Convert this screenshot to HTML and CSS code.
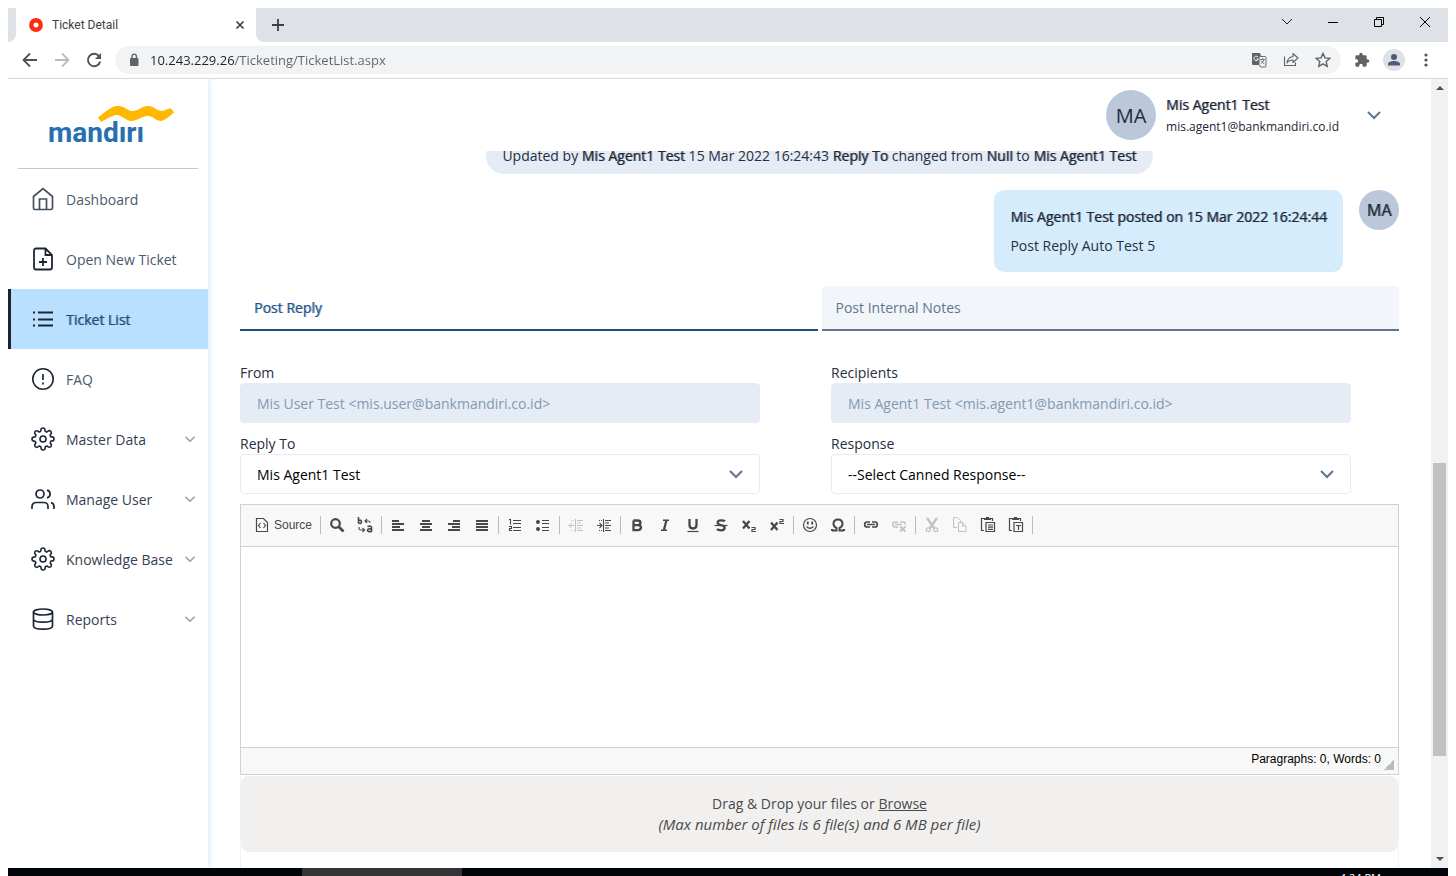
FILE: index.html
```html
<!DOCTYPE html>
<html lang="en">
<head>
<meta charset="utf-8">
<title>Ticket Detail</title>
<link rel="stylesheet" href="styles.css">
</head>
<body>
<svg class="sprite" aria-hidden="true">
  <symbol id="chevron" viewBox="0 0 16 16"><path d="M2 5l6 6 6-6" fill="none" stroke="currentColor" stroke-width="2"/></symbol>
  <symbol id="gear" viewBox="0 0 24 24"><g fill="none" stroke="currentColor" stroke-width="1.6"><circle cx="12" cy="12" r="3"/><path d="M19.4 15a1.65 1.65 0 0 0 .33 1.82l.06.06a2 2 0 1 1-2.83 2.83l-.06-.06a1.65 1.65 0 0 0-2.8 1.17V21a2 2 0 0 1-4 0v-.09a1.65 1.65 0 0 0-2.91-1.2l-.06.06a2 2 0 1 1-2.83-2.83l.06-.06a1.65 1.65 0 0 0-1.17-2.8H3a2 2 0 0 1 0-4h.09a1.65 1.65 0 0 0 1.2-2.91l-.06-.06a2 2 0 1 1 2.83-2.83l.06.06a1.65 1.65 0 0 0 2.8-1.17V3a2 2 0 0 1 4 0v.09a1.65 1.65 0 0 0 2.91 1.2l.06-.06a2 2 0 1 1 2.83 2.83l-.06.06a1.65 1.65 0 0 0 1.17 2.8H21a2 2 0 0 1 0 4h-.09a1.65 1.65 0 0 0-1.51 1.08z"/></g></symbol>
</svg>

<div class="window">
  <header class="browser">
    <div class="tabstrip">
      <div class="strip-edge"></div>
      <div class="browser-tab">
        <svg class="favicon" viewBox="0 0 14 14"><circle cx="7" cy="7" r="4.7" fill="none" stroke="#ff2a12" stroke-width="4.4"/></svg>
        <span class="tab-title">Ticket Detail</span>
        <button class="plain" aria-label="Close tab"><svg width="10" height="10" viewBox="0 0 10 10"><path d="M1.500 1.500l7 7M8.500 1.500l-7 7" stroke="#3c4043" stroke-width="1.7"/></svg></button>
      </div>
      <div class="strip-rest">
        <button class="plain" aria-label="New tab"><svg width="12" height="12" viewBox="0 0 12 12"><path d="M6 0v12M0 6h12" stroke="#3c4043" stroke-width="1.8"/></svg></button>
        <div class="window-buttons">
          <button class="plain" aria-label="Search tabs"><svg width="12" height="12" viewBox="0 0 12 12"><path d="M1 3l5 5 5-5" fill="none" stroke="#222"/></svg></button>
          <button class="plain" aria-label="Minimize"><svg width="12" height="12" viewBox="0 0 12 12"><path d="M1 6.5h10" stroke="#000"/></svg></button>
          <button class="plain" aria-label="Restore"><svg width="12" height="12" viewBox="0 0 12 12"><path d="M1.5 3.5h7v7h-7zM3.500 3.500v-2h7v7h-2" fill="none" stroke="#000"/></svg></button>
          <button class="plain" aria-label="Close"><svg width="12" height="12" viewBox="0 0 12 12"><path d="M1 1l10 10M11 1L1 11" stroke="#000"/></svg></button>
        </div>
      </div>
    </div>
    <div class="navbar">
      <div class="history">
        <button class="plain" aria-label="Back"><svg width="16" height="16" viewBox="0 0 16 16"><path d="M15 8H2M8 1.500L1.500 8 8 14.500" fill="none" stroke="#4f5357" stroke-width="1.8"/></svg></button>
        <button class="plain" aria-label="Forward"><svg width="16" height="16" viewBox="0 0 16 16"><path d="M1 8h13M8 1.500L14.500 8 8 14.500" fill="none" stroke="#b9bbbe" stroke-width="1.800"/></svg></button>
        <button class="plain" aria-label="Reload"><svg width="16" height="16" viewBox="0 0 16 16"><path d="M13.300 4.500A6.200 6.200 0 1 0 14.200 9.500" fill="none" stroke="#4f5357" stroke-width="1.900"/><path d="M15 1v6H9z" fill="#4f5357"/></svg></button>
      </div>
      <div class="address">
        <svg width="10" height="14" viewBox="0 0 10 14"><rect x="1" y="5" width="8.500" height="8" rx="1" fill="#5f6368"/><path d="M3 5.500V3.300a2.200 2.200 0 0 1 4.400 0v2.200" fill="none" stroke="#5f6368" stroke-width="1.400"/></svg>
        <input class="url" aria-label="Address" value="10.243.229.26/Ticketing/TicketList.aspx">
        <button class="plain" aria-label="Translate"><svg width="16" height="16" viewBox="0 0 16 16"><path d="M1 1h8l4 12H2a1 1 0 0 1-1-1z" fill="#5f6368"/><path d="M7 5.200A2.200 2.200 0 1 0 7.300 7H5.500" fill="none" stroke="#fff"/><path d="M8.500 4.500H14a1 1 0 0 1 1 1V14a1 1 0 0 1-1 1H9.500l-1-2" fill="#f1f3f4" stroke="#5f6368" stroke-width=".9"/><path d="M9 7.500h5M11.500 6v1.500M13 7.500q-1 3-3 4M10 8.500q1 2.500 3.500 3.500" fill="none" stroke="#5f6368" stroke-width=".8"/></svg></button>
        <button class="plain" aria-label="Share"><svg width="16" height="16" viewBox="0 0 16 16"><path d="M1.500 4.500v9h11v-3" fill="none" stroke="#5f6368" stroke-width="1.100"/><path d="M10 1.500L15 6l-5 4.500V8C7 8 5.200 9 4 11c.300-3.500 2.500-6 6-6.500z" fill="none" stroke="#5f6368" stroke-width="1.100" stroke-linejoin="round"/></svg></button>
        <button class="plain" aria-label="Bookmark"><svg width="16" height="16" viewBox="0 0 16 16"><path d="M8 1.500l2 4.400 4.800.500-3.600 3.200 1 4.700L8 11.900l-4.200 2.400 1-4.700L1.200 6.400 6 5.900z" fill="none" stroke="#5f6368" stroke-width="1.400"/></svg></button>
      </div>
      <button class="plain" aria-label="Extensions"><svg width="16" height="16" viewBox="0 0 24 24"><path fill="#5f6368" d="M20.500 11H19V7a2 2 0 0 0-2-2h-4V3.500a2.500 2.500 0 0 0-5 0V5H4a2 2 0 0 0-2 2v3.800h1.500a2.700 2.700 0 0 1 0 5.400H2V20a2 2 0 0 0 2 2h3.800v-1.500a2.700 2.700 0 0 1 5.400 0V22H17a2 2 0 0 0 2-2v-4h1.500a2.500 2.500 0 0 0 0-5z"/></svg></button>
      <button class="plain" aria-label="Profile"><svg width="22" height="22" viewBox="0 0 22 22"><circle cx="11" cy="11" r="11" fill="#dee1e6"/><circle cx="11" cy="8" r="3" fill="#4f5b75"/><path d="M5 16.500v-1.500c0-2 3-3 6-3s6 1 6 3v1.500z" fill="#4f5b75"/></svg></button>
      <button class="plain" aria-label="Menu"><svg width="16" height="16" viewBox="0 0 16 16" fill="#4f5357"><circle cx="8" cy="3" r="1.600"/><circle cx="8" cy="8" r="1.600"/><circle cx="8" cy="13" r="1.600"/></svg></button>
    </div>
  </header>

  <div class="page">
    <aside class="sidebar">
      <div class="brand">
        <svg width="126" height="40" viewBox="0 0 126 40" role="img" aria-label="mandiri">
          <path fill="#ffb700" d="M49 13.500C55 9 61 3 68 2c7-1 10 5 16 5 5 0 9-5 15-5 6 0 9 5 14 5 3-.500 6-2.500 9-2.500l3 4c-4 3-8 7.500-13 8.500-5 0-8-5-13-5-6 0-11 5-17 5-5 0-9-6-14-6-5 0-10 4-16 7z"/>
          <text class="brand-name" x="-1" y="38">mandırı</text>
        </svg>
      </div>
      <nav class="menu">
        <a class="item" href="#"><svg viewBox="0 0 24 24"><path d="M2.500 9.500L12 1.500l9.500 8V21a1.500 1.500 0 0 1-1.500 1.500H4A1.500 1.500 0 0 1 2.500 21z M8.500 22v-10h7v10" fill="none" stroke="#45505f" stroke-width="1.700"/></svg><span>Dashboard</span></a>
        <a class="item" href="#"><svg viewBox="0 0 24 24"><path d="M14.500 1.500H5A2 2 0 0 0 3 3.500v17a2 2 0 0 0 2 2h14a2 2 0 0 0 2-2V8zM14.500 1.500V8H21M12 11v8M8 15h8" fill="none" stroke="currentColor" stroke-width="1.800"/></svg><span>Open New Ticket</span></a>
        <a class="item active" href="#"><svg viewBox="0 0 24 24"><path d="M7 5.500h15M7 12.500h15M7 18.500h15" stroke="currentColor" stroke-width="1.800"/><path d="M2 5.500h2M2 12.500h2M2 18.500h2" stroke="currentColor" stroke-width="1.800"/></svg><span>Ticket List</span></a>
        <a class="item" href="#"><svg viewBox="0 0 24 24"><circle cx="12" cy="12" r="10.200" fill="none" stroke="currentColor" stroke-width="1.600"/><path d="M12 7v6M12 15.500v2" stroke="currentColor" stroke-width="1.700"/></svg><span>FAQ</span></a>
        <a class="item group" href="#"><svg viewBox="0 0 24 24"><use href="#gear"/></svg><span>Master Data</span><svg class="chev"><use href="#chevron"/></svg></a>
        <a class="item group" href="#"><svg viewBox="0 0 24 24"><path d="M17 22v-2.500a4 4 0 0 0-4-4H5a4 4 0 0 0-4 4V22M23 22v-2.500a4 4 0 0 0-3-3.900M16 3.100a4 4 0 0 1 0 7.800" fill="none" stroke="currentColor" stroke-width="1.700"/><circle cx="9" cy="7" r="4" fill="none" stroke="currentColor" stroke-width="1.700"/></svg><span>Manage User</span><svg class="chev"><use href="#chevron"/></svg></a>
        <a class="item group" href="#"><svg viewBox="0 0 24 24"><use href="#gear"/></svg><span>Knowledge Base</span><svg class="chev"><use href="#chevron"/></svg></a>
        <a class="item group" href="#"><svg viewBox="0 0 24 24"><g fill="none" stroke="currentColor" stroke-width="1.700"><ellipse cx="12" cy="5" rx="9.500" ry="3"/><path d="M2.500 5v14c0 2 4 3.200 9.500 3.200s9.500-1.200 9.500-3.200V5M2.500 12c0 2 4 3.200 9.500 3.200s9.500-1.200 9.500-3.200"/></g></svg><span>Reports</span><svg class="chev"><use href="#chevron"/></svg></a>
      </nav>
    </aside>

    <main class="main">
      <div class="userbar">
        <div class="avatar large">MA</div>
        <div class="who">
          <strong class="name">Mis Agent1 Test</strong>
          <span class="mail">mis.agent1@bankmandiri.co.id</span>
        </div>
        <button class="plain user-menu" aria-label="Account menu"><svg class="chev"><use href="#chevron"/></svg></button>
      </div>

      <div class="scroller">
        <div class="thread">
          <p class="event">Updated by <b>Mis Agent1 Test</b> 15 Mar 2022 16:24:43 <b>Reply To</b> changed from <b>Null</b> to <b>Mis Agent1 Test</b></p>
          <div class="message">
            <article class="bubble">
              <b>Mis Agent1 Test posted on 15 Mar 2022 16:24:44</b>
              <p>Post Reply Auto Test 5</p>
            </article>
            <div class="avatar small">MA</div>
          </div>
        </div>

        <div class="reply-tabs" role="tablist">
          <button class="reply-tab selected" role="tab" aria-selected="true">Post Reply</button>
          <button class="reply-tab" role="tab" aria-selected="false">Post Internal Notes</button>
        </div>

        <form class="reply">
          <div class="fields">
            <div class="field"><label for="from">From</label><input id="from" disabled value="Mis User Test &lt;mis.user@bankmandiri.co.id&gt;"></div>
            <div class="field"><label for="recipients">Recipients</label><input id="recipients" disabled value="Mis Agent1 Test &lt;mis.agent1@bankmandiri.co.id&gt;"></div>
            <div class="field"><label for="reply-to">Reply To</label><div class="select"><select id="reply-to"><option>Mis Agent1 Test</option></select><svg class="chev"><use href="#chevron"/></svg></div></div>
            <div class="field"><label for="response">Response</label><div class="select"><select id="response"><option>--Select Canned Response--</option></select><svg class="chev"><use href="#chevron"/></svg></div></div>
          </div>

          <div class="editor">
            <div class="tools" role="toolbar" aria-label="Editor toolbar">
              <div class="tool-group">
                <button type="button" class="source"><svg viewBox="0 0 16 16"><path d="M2.500 1.500h7l4 4v9h-11v-13zM6.500 6L4.500 8.500l2 2.500M9.500 6l2 2.500-2 2.500" fill="none" stroke="currentColor" stroke-width="1.200"/></svg>Source</button>
              </div>
              <div class="tool-group">
                <button type="button" aria-label="Find"><svg viewBox="0 0 16 16"><circle cx="6.500" cy="6.500" r="4.300" fill="none" stroke="currentColor" stroke-width="2.200"/><path d="M9.500 9.500l5 5" stroke="currentColor" stroke-width="2.600"/></svg></button>
                <button type="button" aria-label="Replace"><svg viewBox="0 0 16 16"><path d="M1.500 0v6.500M1.500 3.500q3-1 3 1.300t-3 1.200M10.500 9.500q4-1 4 1V15M14.500 12q-4-.500-4 1.300t4 1.200" fill="none" stroke="currentColor" stroke-width="1.600"/><path d="M8 4h3.500q1.500 0 1.500 2M10 2L8 4l2 2M2 10v1.500q0 1.500 2 1.500h3M5.500 11l2 2-2 2" fill="none" stroke="currentColor" stroke-width="1.100"/></svg></button>
              </div>
              <div class="tool-group">
                <button type="button" aria-label="Align left"><svg viewBox="0 0 16 16"><path d="M2 4h7M2 7h12M2 10h8M2 13h12" stroke="currentColor" stroke-width="2"/></svg></button>
                <button type="button" aria-label="Center"><svg viewBox="0 0 16 16"><path d="M4 4h8M2 7h12M4 10h8M2 13h12" stroke="currentColor" stroke-width="2"/></svg></button>
                <button type="button" aria-label="Align right"><svg viewBox="0 0 16 16"><path d="M7 4h7M2 7h12M6 10h8M2 13h12" stroke="currentColor" stroke-width="2"/></svg></button>
                <button type="button" aria-label="Justify"><svg viewBox="0 0 16 16"><path d="M2 4h12M2 7h12M2 10h12M2 13h12" stroke="currentColor" stroke-width="2"/></svg></button>
              </div>
              <div class="tool-group">
                <button type="button" aria-label="Numbered list"><svg viewBox="0 0 16 16"><path d="M6 3.500h8M6 6.500h8M6 10.500h8M6 13.500h8M2 2.500h1.500v5M2 9.500h2.500v2h-2v2h2.500" fill="none" stroke="currentColor" stroke-width="1.100"/></svg></button>
                <button type="button" aria-label="Bulleted list"><svg viewBox="0 0 16 16"><path d="M7 3.500h7M7 6.500h7M7 10.500h7M7 13.500h7" stroke="currentColor" stroke-width="1.200"/><circle cx="3" cy="5" r="2" fill="currentColor"/><circle cx="3" cy="12" r="2" fill="currentColor"/></svg></button>
              </div>
              <div class="tool-group">
                <button type="button" disabled aria-label="Decrease indent"><svg viewBox="0 0 16 16"><path d="M7.500 2v13M9 3.500h6M9 6h4M9 8.500h6M9 11h4M9 13.500h6M6 8.500H1M3.500 6L1 8.500 3.500 11M3 3.500h1M5 3.500h1M3 13.500h1M5 13.500h1" fill="none" stroke="currentColor"/></svg></button>
                <button type="button" aria-label="Increase indent"><svg viewBox="0 0 16 16"><path d="M7.500 2v13M9 3.500h6M9 6h4M9 8.500h6M9 11h4M9 13.500h6M1 8.500h5M3.500 6L6 8.500 3.500 11M3 3.500h1M5 3.500h1M3 13.500h1M5 13.500h1" fill="none" stroke="currentColor" stroke-width="1.100"/></svg></button>
              </div>
              <div class="tool-group">
                <button type="button" aria-label="Bold"><svg viewBox="0 0 16 16"><path d="M4.500 3.500h4q3 0 3 2.300t-3 2.300h-4M8.500 8.100q3.500 0 3.500 2.500t-3.500 2.500h-4V3.500" fill="none" stroke="currentColor" stroke-width="2.300"/></svg></button>
                <button type="button" aria-label="Italic"><svg viewBox="0 0 16 16"><path d="M6 3.200h6M4 13.300h6" stroke="currentColor" stroke-width="1.500"/><path d="M9.500 3L6.800 13.500" stroke="currentColor" stroke-width="2.300"/></svg></button>
                <button type="button" aria-label="Underline"><svg viewBox="0 0 16 16"><path d="M4.500 2v6q0 3.500 3.500 3.500T11.500 8V2" fill="none" stroke="currentColor" stroke-width="2.300"/><path d="M2.500 14.500h11" stroke="currentColor" stroke-width="1.200"/></svg></button>
                <button type="button" aria-label="Strikethrough"><svg viewBox="0 0 16 16"><path d="M12 4.300Q11 3.300 8 3.300 4.700 3.300 4.700 5.500T8 8.200q3.600.500 3.600 2.800T8 13.300q-3 0-4-1.200" fill="none" stroke="currentColor" stroke-width="2.300"/><path d="M1.500 8.500h13" stroke="currentColor" stroke-width="1.200"/></svg></button>
                <button type="button" aria-label="Subscript"><svg viewBox="0 0 16 16"><path d="M2 4l6.500 7.500M8.500 4L2 11.500" stroke="currentColor" stroke-width="2.300"/><path d="M10.500 10.500h3.500v2h-3v2h4" fill="none" stroke="currentColor" stroke-width="1.200"/></svg></button>
                <button type="button" aria-label="Superscript"><svg viewBox="0 0 16 16"><path d="M2 5.500L8.500 13M8.500 5.500L2 13" stroke="currentColor" stroke-width="2.300"/><path d="M10.500 2.500h3.500v2h-3v2h4" fill="none" stroke="currentColor" stroke-width="1.200"/></svg></button>
              </div>
              <div class="tool-group">
                <button type="button" aria-label="Smiley"><svg viewBox="0 0 16 16"><circle cx="8" cy="8" r="6.500" fill="none" stroke="currentColor" stroke-width="1.200"/><path d="M5.800 4.500v3M10.200 4.500v3" stroke="currentColor" stroke-width="1.800"/><path d="M4.500 9.500q3.500 3.500 7 0" fill="none" stroke="currentColor" stroke-width="1.200"/></svg></button>
                <button type="button" aria-label="Special character"><svg viewBox="0 0 16 16"><path d="M2 13.500h4.500V11Q3.500 9.500 3.500 7 3.500 2.500 8 2.500T12.500 7q0 2.500-3 4v2.500H14M2 14v-2M14 14v-2" fill="none" stroke="currentColor" stroke-width="2"/></svg></button>
              </div>
              <div class="tool-group">
                <button type="button" aria-label="Link"><svg viewBox="0 0 16 16"><path d="M7 5H4Q1.700 5 1.700 7.500T4 10h3M9 5h3q2.300 0 2.300 2.500T12 10H9" fill="none" stroke="currentColor" stroke-width="1.700"/><path d="M4 7.500h8" stroke="currentColor" stroke-width="1.500"/></svg></button>
                <button type="button" disabled aria-label="Unlink"><svg viewBox="0 0 16 16"><path d="M7 5H4Q1.700 5 1.700 7.500T4 10h3M9 5h3q2.300 0 2.300 2.500M4 7.500h7" fill="none" stroke="currentColor" stroke-width="1.500"/><path d="M9 9.500l5.500 5M14.500 9.500L9 14.500" stroke="currentColor" stroke-width="1.700"/></svg></button>
              </div>
              <div class="tool-group">
                <button type="button" disabled aria-label="Cut"><svg viewBox="0 0 16 16"><path d="M3 1l7.500 10.500M13 1L5.500 11.500" stroke="currentColor" stroke-width="2.400"/><circle cx="4.200" cy="12.800" r="1.900" fill="none" stroke="currentColor" stroke-width="1.300"/><circle cx="11.800" cy="12.800" r="1.900" fill="none" stroke="currentColor" stroke-width="1.300"/></svg></button>
                <button type="button" disabled aria-label="Copy"><svg viewBox="0 0 16 16"><path d="M5 10.500H1.500v-10h4l3 3v2M6.500 5.500h4l3.500 3.500v5.500H6.500zM10.500 5.500V9H14" fill="none" stroke="currentColor"/></svg></button>
                <button type="button" aria-label="Paste"><svg viewBox="0 0 16 16"><path d="M4 1.500H1.500v12H4M11 1.500h1.500V4M6 5.500h8.500v9H6zM8 8h5M8 10.200h5M8 12.400h5" fill="none" stroke="currentColor" stroke-width="1.200"/><path d="M4 3V1h2V0h3v1h2v2z" fill="currentColor"/></svg></button>
                <button type="button" aria-label="Paste as plain text"><svg viewBox="0 0 16 16"><path d="M4 1.500H1.500v12H4M11 1.500h1.500V4M6 5.500h8.500v9H6zM8 8.500h5M10.500 8.500v4.500" fill="none" stroke="currentColor" stroke-width="1.200"/><path d="M4 3V1h2V0h3v1h2v2z" fill="currentColor"/></svg></button>
              </div>
            </div>
            <textarea class="body" aria-label="Reply text"></textarea>
            <div class="status"><span>Paragraphs: 0, Words: 0</span><i class="grip"></i></div>
          </div>

          <div class="attachments">
            <div class="dropzone">
              <p>Drag &amp; Drop your files or <a href="#">Browse</a></p>
              <p class="limit">(Max number of files is 6 file(s) and 6 MB per file)</p>
            </div>
          </div>
        </form>
      </div>
    </main>

    <div class="scrollbar" aria-hidden="true">
      <i class="arrow up"></i>
      <div class="track"><div class="before"></div><div class="thumb"></div><div class="after"></div></div>
      <i class="arrow down"></i>
    </div>
  </div>

  <footer class="taskbar"><div class="lead"></div><div class="task"></div><time class="clock">4:24 PM</time></footer>
</div>
</body>
</html>
```
FILE: styles.css
```css
* { box-sizing: border-box; }

body {
  margin: 0;
  background: #fff;
  color: #252f3d;
  font: 14px/21px "Open Sans", "Noto Sans", sans-serif;
}

p { margin: 0; }
button, input, select, textarea { font: inherit; color: inherit; }
svg { flex: none; display: block; }
.sprite { position: absolute; width: 0; height: 0; }

.plain {
  display: flex;
  padding: 0;
  border: 0;
  background: none;
}

b, .name, .small, .active span, .selected {
  color: #1c2635;
  font-weight: 400;
  text-shadow: 1px 0 0 rgb(28 38 53 / 55%);
}

.window {
  display: flex;
  flex-direction: column;
  height: 100vh;
  padding: 8px 8px 0;
  overflow: hidden;
}

/* Browser frame */
.browser { flex: none; border-bottom: 1px solid #d5d7da; }
.tabstrip { display: flex; height: 34px; }
.strip-edge { width: 8px; background: #dee1e6; border-bottom-right-radius: 8px; }
.browser-tab {
  display: flex;
  align-items: center;
  width: 240px;
  padding: 0 11px 0 13px;
  border-radius: 8px 8px 0 0;
  background: #fff;
}
.favicon { width: 14px; height: 14px; }
.tab-title { flex: 1; margin-left: 9px; color: #3c4043; font-family: Roboto, sans-serif; font-size: 12px; }
.strip-rest {
  display: flex;
  flex: 1;
  align-items: center;
  justify-content: space-between;
  padding: 0 17px 0 16px;
  border-bottom-left-radius: 8px;
  background: #dee1e6;
}
.window-buttons { display: flex; gap: 34px; margin-bottom: 6px; }
.navbar {
  display: flex;
  align-items: center;
  gap: 13px;
  height: 36px;
  padding: 0 14px;
}
.history { display: flex; gap: 16px; }
.address {
  display: flex;
  flex: 1;
  align-items: center;
  gap: 16px;
  height: 28px;
  padding: 0 10px 0 14px;
  border-radius: 14px;
  background: #f1f3f4;
}
.url {
  flex: 1;
  min-width: 0;
  margin-left: -5px;
  padding: 0;
  border: 0;
  outline: 0;
  background: linear-gradient(to right, #202124 85px, #5f6368 85px);
  -webkit-background-clip: text;
  background-clip: text;
  font-size: 13px;
  -webkit-text-fill-color: transparent;
}

/* Sidebar */
.page { display: flex; flex: 1; min-height: 0; }
.sidebar {
  z-index: 1;
  flex: none;
  width: 200px;
  background: #fff;
  box-shadow: 1px 0 6px #d5e7fb;
  clip-path: inset(0 -10px 0 0);
}
.brand {
  height: 90px;
  margin: 0 10px;
  padding: 25px 0 0 31px;
  border-bottom: 1px solid #b8c8da;
}
.brand-name { font: 700 28px Roboto, sans-serif; fill: #2670b0; }
.item {
  display: flex;
  align-items: center;
  height: 60px;
  padding: 0 12px 0 20px;
  border-left: 3px solid transparent;
  color: #1c2635;
  text-decoration: none;
}
.item > svg { width: 24px; height: 24px; }
.item span { flex: 1; margin-left: 11px; color: #4b596b; white-space: nowrap; }
.item.group span { color: #354152; }
.item.active { border-color: #1c2434; background: #b9e1ff; }
.item.active span { color: #214a77; text-shadow: 1px 0 0 rgb(33 74 119 / 55%); }
.item .chev { width: 12px; height: 16px; color: #8aa0b8; }

/* Main column */
.main { display: flex; flex: 1; flex-direction: column; min-width: 0; }
.userbar {
  display: flex;
  flex: none;
  align-items: center;
  justify-content: flex-end;
  height: 72px;
  padding: 0 49px 0 32px;
}
.avatar {
  display: flex;
  flex: none;
  align-items: center;
  justify-content: center;
  border-radius: 50%;
  background: #bbc8da;
  color: #202b3a;
}
.large { width: 50px; height: 50px; font-size: 20px; }
.small { width: 40px; height: 40px; font-size: 16px; }
.who {
  display: flex;
  flex-direction: column;
  gap: 1px;
  margin: 0 27px 0 10px;
  padding-top: 1px;
  color: #1c2635;
}
.mail { font-size: 12px; line-height: 22px; }
.user-menu { color: #60758f; }
.chev { width: 16px; height: 16px; }

.scroller { flex: 1; min-height: 0; padding: 0 32px; overflow: hidden; }
.thread {
  display: flex;
  flex-direction: column;
  align-items: center;
  gap: 16px;
  margin-top: -13px;
}
.event { padding: 8px 16px; border-radius: 18px; background: #e5ecf5; line-height: 20px; }
.message { display: flex; gap: 16px; align-self: flex-end; }
.bubble {
  display: flex;
  flex-direction: column;
  gap: 8px;
  padding: 16px;
  border-radius: 10px;
  background: #d5ecfd;
}

.reply-tabs { display: grid; grid-template-columns: 1fr 1fr; gap: 4px; margin-top: 14px; }
.reply-tab {
  height: 45px;
  padding: 0 14px;
  border: 0;
  border-bottom: 2px solid #64748b;
  border-radius: 4px 4px 0 0;
  background: #f2f6fb;
  color: #64748b;
  text-align: left;
}
.reply-tab.selected {
  border-color: #1c4f84;
  background: #fff;
  color: #265588;
  text-shadow: 1px 0 0 rgb(38 85 136 / 55%);
}

.fields {
  display: grid;
  grid-template-columns: 1fr 1fr;
  gap: 10px 71px;
  margin: 31px 48px 10px 0;
}
.field label { display: block; }
.field input, .field select {
  display: block;
  width: 100%;
  height: 40px;
  padding: 0 16px;
  border: 1px solid #e5ecf5;
  border-radius: 4px;
  background: #fff;
  color: #000;
  appearance: none;
}
.field input { background: #e5ecf5; color: #8598ae; }
.select { display: grid; align-items: center; }
.select > * { grid-area: 1 / 1; }
.select .chev { justify-self: end; margin-right: 16px; color: #60758f; pointer-events: none; }

/* Rich text editor */
.editor { border: 1px solid #d1d1d1; font: 12px/16px "Liberation Sans", Arial, sans-serif; }
.tools {
  display: flex;
  align-items: center;
  height: 42px;
  padding: 0 0 2px 9px;
  border-bottom: 1px solid #d1d1d1;
  background: #f8f8f8;
}
.tool-group { display: flex; align-items: center; }
.tool-group::after { content: ""; width: 1px; height: 18px; margin: 0 2px; background: #bcbcbc; }
.tools button {
  display: flex;
  padding: 6px;
  border: 0;
  background: none;
  color: #484848;
}
.tools button:disabled { color: #c2c2c2; }
.tools .source { gap: 4px; padding-left: 4px; }
.tools svg { width: 16px; height: 16px; }
.body { display: block; width: 100%; height: 200px; border: 0; outline: 0; resize: none; }
.status {
  display: flex;
  justify-content: flex-end;
  gap: 3px;
  height: 27px;
  padding: 3px 4px;
  border-top: 1px solid #d1d1d1;
  background: #f8f8f8;
  color: #000;
}
.grip {
  align-self: flex-end;
  width: 10px;
  height: 10px;
  margin-bottom: 1px;
  background: linear-gradient(135deg, transparent 50%, #bcbcbc 50%);
}

.attachments {
  height: 160px;
  margin-top: 1px;
  border: solid #f0f4f9;
  border-width: 0 1px;
}
.dropzone {
  padding: 17px;
  border-radius: 8px;
  background: #f1f0ef;
  color: #4a4a4a;
  text-align: center;
}
.dropzone a { color: inherit; }
.limit { font-size: 15px; font-style: italic; }

/* Page scrollbar */
.scrollbar {
  display: flex;
  flex: none;
  flex-direction: column;
  align-items: center;
  width: 17px;
  padding: 7px 0;
  background: #f1f1f1;
}
.arrow { border: 4px solid transparent; border-top: 0; border-bottom: 4px solid #505050; }
.arrow.down { border-top: 4px solid #505050; border-bottom: 0; }
.track { display: flex; flex: 1; flex-direction: column; width: 13px; }
.before { flex: 373; }
.thumb { flex: 293; background: #c1c1c1; }
.after { flex: 101; }

.taskbar { display: flex; flex: none; height: 8px; overflow: hidden; background: #010409; }
.lead { width: 294px; }
.task { width: 160px; background: #343437; }
.clock { margin: 2px 67px 0 auto; color: #fff; font-size: 11px; line-height: 16px; }
```
